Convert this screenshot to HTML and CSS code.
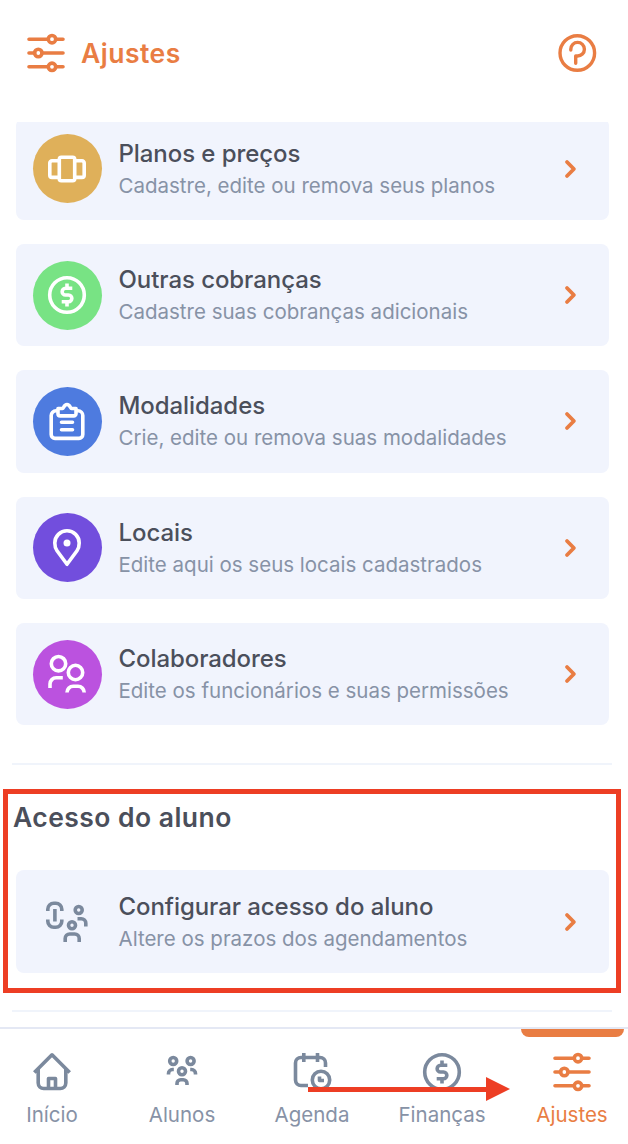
FILE: index.html
```html
<!DOCTYPE html>
<html lang="pt-BR">
<head>
<meta charset="utf-8">
<title>Ajustes</title>
<link rel="stylesheet" href="styles.css">
</head>
<body>
<svg class="defs" width="0" height="0">
  <symbol id="sliders" viewBox="0 0 40 40">
    <path d="M3 6.200H22.300M29.700 6.200H37M3 20H8.600M16 20H37M3 33.800H22.300M29.700 33.800H37"/>
    <circle cx="26" cy="6.200" r="3.700"/><circle cx="12.300" cy="20" r="3.700"/><circle cx="26" cy="33.800" r="3.700"/>
  </symbol>
  <symbol id="coin" viewBox="0 0 40 40">
    <circle cx="20" cy="20" r="17.300"/>
    <path d="M20 8.500v4.500M20 27v4.500M25.300 13.300h-6.800a3.350 3.350 0 0 0 0 6.700h3a3.350 3.350 0 0 1 0 6.700h-6.800"/>
  </symbol>
  <symbol id="chevron" viewBox="0 0 14 20">
    <path d="M3 3 9.900 10 3 17"/>
  </symbol>
</svg>
<div class="screen">
  <header class="header">
    <svg class="icon icon-header"><use href="#sliders"/></svg>
    <h1 class="header-title">Ajustes</h1>
    <svg class="icon icon-help" viewBox="0 0 40 40"><circle cx="20.300" cy="20" r="17.300"/><path d="M13.800 17v-.8a6.800 6.800 0 1 1 6.800 6.800h-1.900v7.200"/></svg>
  </header>
  <main class="content">
    <section class="cards">
      <a class="card">
        <span class="badge gold"><svg class="icon" viewBox="0 0 40 40"><rect x="12.300" y="8.200" width="15.400" height="23.600" rx="2"/><path d="M12 11.800H5a2.200 2.200 0 0 0-2.200 2.200v12.200A2.200 2.200 0 0 0 5 28.400h7M28 11.800h7a2.200 2.200 0 0 1 2.200 2.200v12.200a2.200 2.200 0 0 1-2.200 2.200h-7"/></svg></span>
        <span class="card-text"><b class="card-title">Planos e preços</b><span class="card-sub">Cadastre, edite ou remova seus planos</span></span>
        <svg class="chevron"><use href="#chevron"/></svg>
      </a>
      <a class="card">
        <span class="badge green"><svg class="icon"><use href="#coin"/></svg></span>
        <span class="card-text"><b class="card-title">Outras cobranças</b><span class="card-sub">Cadastre suas cobranças adicionais</span></span>
        <svg class="chevron"><use href="#chevron"/></svg>
      </a>
      <a class="card">
        <span class="badge blue"><svg class="icon" viewBox="0 0 40 40"><path d="M11 9.800H9a4.800 4.800 0 0 0-4.800 4.800v19a3.800 3.800 0 0 0 3.800 3.800h24a3.800 3.800 0 0 0 3.800-3.800v-19A4.800 4.800 0 0 0 31 9.800h-2"/><path d="M11 7.500h4.500c1.300 0 1.200-4 4.500-4s3.200 4 4.500 4H29v5.200a2.200 2.200 0 0 1-2.200 2.200H13.200a2.200 2.200 0 0 1-2.200-2.200z"/><path class="round" d="M14.500 21.200h11M14.500 28.800h11"/></svg></span>
        <span class="card-text"><b class="card-title">Modalidades</b><span class="card-sub">Crie, edite ou remova suas modalidades</span></span>
        <svg class="chevron"><use href="#chevron"/></svg>
      </a>
      <a class="card">
        <span class="badge violet"><svg class="icon" viewBox="0 0 40 40"><path d="M20 36.300 10 22.700C7.900 19.800 7.800 17 7.800 15a12.200 12.200 0 0 1 24.400 0c0 2-.1 4.800-2.200 7.700z"/><circle class="dot" cx="20" cy="15" r="3.500"/></svg></span>
        <span class="card-text"><b class="card-title">Locais</b><span class="card-sub">Edite aqui os seus locais cadastrados</span></span>
        <svg class="chevron"><use href="#chevron"/></svg>
      </a>
      <a class="card">
        <span class="badge purple"><svg class="icon" viewBox="0 0 40 40"><circle cx="11.500" cy="9.700" r="7.200"/><circle cx="28.500" cy="18.500" r="7.200"/><path d="M3 34v-4a6.200 6.200 0 0 1 6.200-6.200h6.600M20 38.500a6.200 6.200 0 0 1 6.200-6.200h4.800a6.200 6.200 0 0 1 6.200 6.200"/></svg></span>
        <span class="card-text"><b class="card-title">Colaboradores</b><span class="card-sub">Edite os funcionários e suas permissões</span></span>
        <svg class="chevron"><use href="#chevron"/></svg>
      </a>
    </section>
    <hr class="divider">
    <section class="access">
      <h2 class="section-title">Acesso do aluno</h2>
      <a class="card">
        <span class="badge plain"><svg class="icon icon-access" viewBox="0 0 46 46"><path d="M3.800 12v-1.700A6 6 0 0 1 9.800 4.300h2a6 6 0 0 1 6 6V12M3.800 20.500v1.700a6 6 0 0 0 6 6h2a6 6 0 0 0 6-6v-1.700M10.900 10v12.500"/><circle cx="34.700" cy="11" r="3.500"/><circle cx="28" cy="26.200" r="3.500"/><path d="M33.500 19.800h3.800a4.500 4.500 0 0 1 4.500 4.500V27.500M21.200 43v-3.500a4.500 4.500 0 0 1 4.500-4.500h5a4.500 4.500 0 0 1 4.500 4.500V43"/></svg></span>
        <span class="card-text"><b class="card-title">Configurar acesso do aluno</b><span class="card-sub">Altere os prazos dos agendamentos</span></span>
        <svg class="chevron"><use href="#chevron"/></svg>
      </a>
    </section>
    <hr class="divider divider-end">
  </main>
  <nav class="nav">
    <a class="nav-item"><svg class="icon" viewBox="0 0 40 40"><path d="M2.300 20.500 20 2.800 37.700 20.500M6.200 17V31a5.500 5.500 0 0 0 5.500 5.500h16.600a5.500 5.500 0 0 0 5.500-5.500V17M16.500 36v-9.500h7V36"/></svg><span>Início</span></a>
    <a class="nav-item"><svg class="icon" viewBox="0 0 40 40"><circle cx="11.200" cy="9" r="3.500"/><circle cx="28.600" cy="9" r="3.500"/><circle cx="20" cy="19.300" r="3.500"/><path d="M6.500 22.500v-1a4 4 0 0 1 4-4h1.300M33.500 22.500v-1a4 4 0 0 0-4-4h-1.300M15 33v-1.500a3.700 3.700 0 0 1 3.700-3.700h2.600a3.700 3.700 0 0 1 3.700 3.700V33"/></svg><span>Alunos</span></a>
    <a class="nav-item"><svg class="icon" viewBox="0 0 40 40"><path d="M16 33.500H9A5.500 5.500 0 0 1 3.500 28v-17A5.500 5.500 0 0 1 9 5.500h19a5.500 5.500 0 0 1 5.500 5.500V15M11.800 1v9M25.500 1v9"/><circle cx="29" cy="28" r="8.700"/><path d="M27.500 24.500v4H32"/></svg><span>Agenda</span></a>
    <a class="nav-item"><svg class="icon"><use href="#coin"/></svg><span>Finanças</span></a>
    <a class="nav-item active"><svg class="icon"><use href="#sliders"/></svg><span>Ajustes</span></a>
  </nav>
  <div class="highlight"></div>
  <svg class="arrow" viewBox="0 0 204 26"><path d="M0 11h178V1l24 12-24 12v-9H0z"/></svg>
</div>
</body>
</html>
```

FILE: styles.css
```css
* { box-sizing: border-box; }
body { margin: 0; background: #fff; font-family: Inter, "Liberation Sans", sans-serif; }
.defs { position: absolute; }
.screen { position: relative; width: 628px; height: 1144px; overflow: hidden; background: #fff; display: flex; flex-direction: column; }
.icon { display: block; flex: none; width: 40px; height: 40px; fill: none; stroke: currentColor; stroke-width: 3.6; stroke-linecap: butt; stroke-linejoin: round; }
.header { flex: none; height: 122px; padding: 33px 31px 0 26px; display: flex; align-items: flex-start; color: #e97d43; }
.icon-header, .active .icon, .round { stroke-linecap: round; }
.header-title { margin: 4px auto 0 15px; font-size: 26.500px; line-height: 32px; font-weight: 600; letter-spacing: 0.500px; }
.icon-help { stroke-linecap: round; stroke-width: 3.4; }
.content { flex: none; height: 905px; overflow: hidden; }
.cards { display: flex; flex-direction: column; gap: 24px; margin-top: -4.5px; padding: 0 19.500px 0 15.500px; }
.card { display: flex; align-items: center; height: 102.400px; padding: 0 30.500px 0 17px; border-radius: 8px; background: #f1f4fd; }
.badge { flex: none; display: flex; align-items: center; justify-content: center; width: 69px; height: 69px; border-radius: 50%; color: #fff; }
.gold { background: #dfb05a; }
.green { background: #78e384; }
.blue { background: #4e7bdf; }
.violet { background: #724edd; }
.purple { background: #bb52df; }
.plain { color: #7b899d; }
.icon-access { width: 46px; height: 46px; }
.dot { fill: currentColor; stroke: none; }
.card-text { flex: 1; display: flex; flex-direction: column; margin-left: 17px; padding-top: 2px; white-space: nowrap; }
.card-title { font-size: 24px; line-height: 32px; font-weight: 500; letter-spacing: -0.070px; color: #4b4f5b; }
.card-sub { font-size: 20.500px; line-height: 32px; color: #8792a6; }
.chevron { flex: none; width: 14px; height: 20px; fill: none; stroke: #e97d43; stroke-width: 3.8; stroke-linecap: round; stroke-linejoin: round; }
.divider { margin: 37.500px 16px 0 12px; height: 2px; border: 0; background: #f0f4fb; }
.divider-end { margin-top: 37px; }
.access { padding: 35px 19.500px 0 15.500px; }
.section-title { margin: 0 0 36.500px -2.500px; font-size: 26.500px; line-height: 34px; font-weight: 600; letter-spacing: 0.450px; color: #4b4f5b; }
.nav { flex: none; height: 117px; width: 624px; display: grid; grid-template-columns: repeat(5, 130px); justify-content: center; }
.nav::before { content: ""; position: absolute; left: 0; right: 0; top: 1027px; height: 2px; background: #e4e8f4; }
.nav-item { position: relative; display: flex; flex-direction: column; align-items: center; padding-top: 25px; font-size: 20.500px; color: #7b899d; }
.nav-item span { margin-top: 10px; line-height: 26px; color: #8792a6; }
.nav-item.active, .nav-item.active span { color: #e97d43; }
.nav-item.active::before { content: ""; position: absolute; top: 2px; left: 14px; width: 103px; height: 8px; border-radius: 0 0 8px 8px; background: #e97d43; }
.highlight { position: absolute; left: 3px; top: 789px; width: 618px; height: 204px; border: 5px solid #ed3e24; }
.arrow { position: absolute; left: 308px; top: 1076px; width: 204px; height: 26px; fill: #ed3e24; }
```
